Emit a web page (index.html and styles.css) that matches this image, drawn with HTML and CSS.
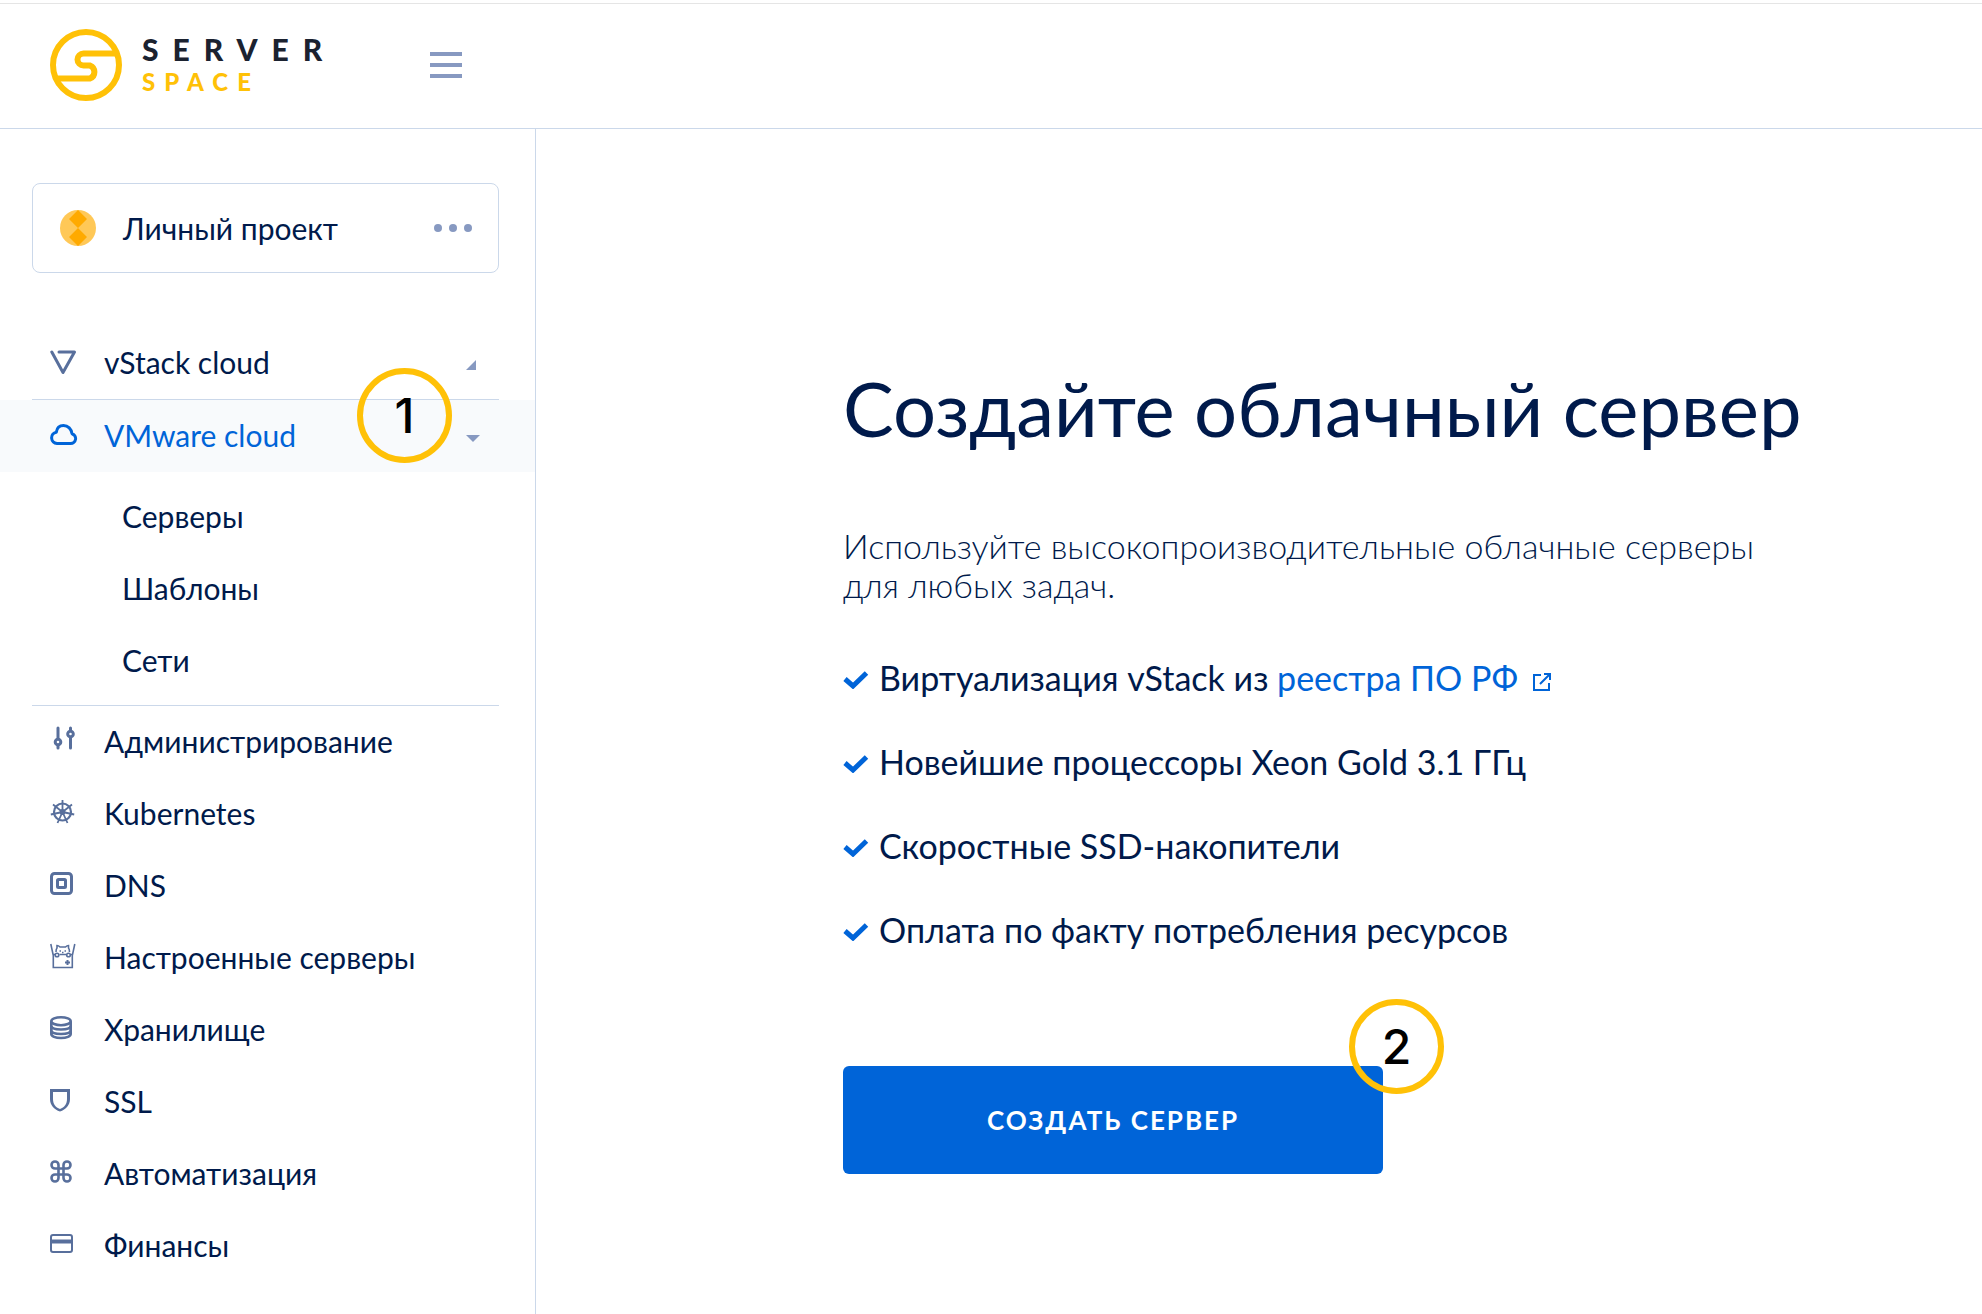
FILE: index.html
```html
<!DOCTYPE html>
<html lang="ru">
<head>
<meta charset="utf-8">
<title>Serverspace</title>
<link rel="stylesheet" href="styles.css">
</head>
<body>
<header class="topbar">
  <a class="logo" href="#" aria-label="Serverspace">
    <svg class="logo-mark" viewBox="0 0 72 72" fill="none" stroke="currentColor" stroke-width="6">
      <circle cx="36" cy="36" r="33"/>
      <path d="M66 24.500H33.500a6 6 0 0 0 0 12H40a7 7 0 0 1 0 13H6"/>
    </svg>
    <span class="logo-text"><span class="logo-server">SERVER</span><span class="logo-space">SPACE</span></span>
  </a>
  <button class="burger" type="button" aria-label="Меню"><span></span><span></span><span></span></button>
</header>
<div class="layout">
  <aside class="sidebar">
    <button class="project" type="button">
      <svg class="avatar" viewBox="0 0 36 36"><circle cx="18" cy="18" r="18" fill="#ffc857"/><path d="M18 0l9 9-9 9-9-9zM18 18l9 9-9 9-9-9z" fill="#ffaa00"/></svg>
      <span class="project-name">Личный проект</span>
      <svg class="dots" viewBox="0 0 38 8" fill="currentColor"><circle cx="4" cy="4" r="4"/><circle cx="19" cy="4" r="4"/><circle cx="34" cy="4" r="4"/></svg>
    </button>
    <nav class="nav">
      <a class="item" href="#">
        <svg class="icon" viewBox="0 0 28 28" fill="none" stroke="currentColor" stroke-width="3" stroke-linecap="round" stroke-linejoin="round"><path d="M9 5H24.500L13 25.500 1.800 5"/></svg>
        <span class="label">vStack cloud</span>
        <svg class="arrow" viewBox="0 0 14 10" fill="currentColor"><path d="M10 0V10H0z"/></svg>
      </a>
      <hr class="rule">
      <div class="current">
        <a class="item" href="#">
          <svg class="icon" viewBox="0 0 28 28" fill="none" stroke="currentColor" stroke-width="3" stroke-linejoin="round"><path d="M7 23.500h13.500a5 5 0 0 0 1.500-9.800c-.5-4.500-4-8.200-8.500-8.200-3.800 0-6.600 2.500-7.200 6.700A5.700 5.700 0 0 0 7 23.500z"/></svg>
          <span class="label">VMware cloud</span>
          <svg class="arrow" viewBox="0 0 14 10" fill="currentColor"><path d="M0 2H14L7 9z"/></svg>
        </a>
        <span class="marker marker-one">1</span>
      </div>
      <div class="sub">
        <a class="subitem" href="#">Серверы</a>
        <a class="subitem" href="#">Шаблоны</a>
        <a class="subitem" href="#">Сети</a>
      </div>
      <hr class="rule">
      <a class="item" href="#"><svg class="icon" viewBox="0 0 28 28" fill="none" stroke="currentColor" stroke-width="3" stroke-linecap="round"><path d="M8 2v10M8 20v2M20.500 2v2M20.500 12v10"/><circle cx="8" cy="16" r="2.800"/><circle cx="20.500" cy="8" r="2.800"/></svg><span class="label">Администрирование</span></a>
      <a class="item" href="#"><svg class="icon" viewBox="0 0 28 28" fill="none" stroke="currentColor" stroke-width="1.800"><circle cx="12.500" cy="14" r="8.500" stroke-width="2.200"/><circle cx="12.500" cy="14" r="2"/><path d="M12.500 14V2M12.500 14L3 6.500M12.500 14L22 6.500M12.500 14L.8 16.500M12.500 14L24.200 16.500M12.500 14L7.500 25M12.500 14L17.500 25"/></svg><span class="label">Kubernetes</span></a>
      <a class="item" href="#"><svg class="icon" viewBox="0 0 28 28" fill="none" stroke="currentColor" stroke-width="3"><rect x="1.500" y="3.500" width="20" height="20" rx="3"/><rect x="7.500" y="9.500" width="8" height="8" rx="1"/></svg><span class="label">DNS</span></a>
      <a class="item" href="#"><svg class="icon" viewBox="0 0 28 28" fill="none" stroke="currentColor" stroke-width="1.600"><path d="M.8 2l2.500 11.500V25.500h19V13.500L24.800 2M3.300 12.500h2M9.500 12.500h7M20.500 12.500h2M6 10C6 8 6.500 6.500 7 6V3.500c1 0 2.500 1 3 1.500h5.500c.5-.5 2-1.500 3-1.500V6c.5.500 1 2 1 4"/><circle cx="7" cy="13" r="1.800"/><circle cx="18.500" cy="13" r="1.800"/><path d="M15 20.500h5M17.500 18v5" stroke-width="2"/><path d="M9.500 9h1.500M14.500 9h1.500M12 10.500h1.500"/></svg><span class="label">Настроенные серверы</span></a>
      <a class="item" href="#"><svg class="icon" viewBox="0 0 28 28" fill="none" stroke="currentColor" stroke-width="2.600"><ellipse cx="11" cy="7.200" rx="9.700" ry="4"/><path d="M1.300 7.500V20c0 2.200 4 4 9.700 4s9.700-1.800 9.700-4V7.500M1.300 11.500c0 2.500 4 4 9.700 4s9.700-1.500 9.700-4M1.300 16c0 2.500 4 4 9.700 4s9.700-1.500 9.700-4"/></svg><span class="label">Хранилище</span></a>
      <a class="item" href="#"><svg class="icon" viewBox="0 0 28 28" fill="currentColor" fill-rule="evenodd"><path d="M0 3H20V13c0 6-4 10.500-10 12.500C4 23.500 0 19 0 13zM3 6V13c0 5 2.500 8.500 7 10 4.500-1.500 7-5 7-10V6z"/></svg><span class="label">SSL</span></a>
      <a class="item" href="#"><svg class="icon" viewBox="0 0 28 28" fill="none" stroke="currentColor" stroke-width="2.600"><path d="M8 10.500H5A3.500 3.500 0 1 1 8.500 7V20A3.500 3.500 0 1 1 5 16.500H17A3.500 3.500 0 1 1 13.500 20V7A3.500 3.500 0 1 1 17 10.500z"/></svg><span class="label">Автоматизация</span></a>
      <a class="item" href="#"><svg class="icon" viewBox="0 0 28 28" fill="none" stroke="currentColor" stroke-width="2"><rect x="1" y="5" width="21" height="17" rx="2"/><path d="M1 11.500h21" stroke-width="4"/></svg><span class="label">Финансы</span></a>
    </nav>
  </aside>
  <main class="main">
    <h1 class="title">Создайте облачный сервер</h1>
    <p class="lead">Используйте высокопроизводительные облачные серверы<br>для любых задач.</p>
    <ul class="features">
      <li><svg class="check" viewBox="0 0 26 18" fill="none" stroke="currentColor" stroke-width="5"><path d="M2 8l8 7L23.500 2"/></svg><span>Виртуализация vStack из <a class="link" href="#">реестра ПО РФ<svg class="external" viewBox="0 0 18 18" fill="none" stroke="currentColor" stroke-width="2"><path d="M8 2H1V17H16V10M11 1h6v6M17 1L7 11"/></svg></a></span></li>
      <li><svg class="check" viewBox="0 0 26 18" fill="none" stroke="currentColor" stroke-width="5"><path d="M2 8l8 7L23.500 2"/></svg><span>Новейшие процессоры Xeon Gold 3.1 ГГц</span></li>
      <li><svg class="check" viewBox="0 0 26 18" fill="none" stroke="currentColor" stroke-width="5"><path d="M2 8l8 7L23.500 2"/></svg><span>Скоростные SSD-накопители</span></li>
      <li><svg class="check" viewBox="0 0 26 18" fill="none" stroke="currentColor" stroke-width="5"><path d="M2 8l8 7L23.500 2"/></svg><span>Оплата по факту потребления ресурсов</span></li>
    </ul>
    <div class="action">
      <button class="create" type="button">СОЗДАТЬ СЕРВЕР</button>
      <span class="marker marker-two">2</span>
    </div>
  </main>
</div>
</body>
</html>
```
FILE: styles.css
```css
* { box-sizing: border-box; }
body {
  margin: 0;
  min-height: 100vh;
  display: flex;
  flex-direction: column;
  background: #fff;
  color: #001a4b;
  font-family: Lato, "Noto Sans", sans-serif;
  font-size: 30px;
}
button { font: inherit; color: inherit; cursor: pointer; }
a { color: inherit; text-decoration: none; }
svg { display: block; flex: none; }

.topbar {
  display: flex;
  align-items: center;
  height: 129px;
  padding: 2px 50px 0;
  border-bottom: 1px solid #cbd8ea;
  box-shadow: inset 0 3px #fff, inset 0 4px #e5e5e5;
}
.logo { display: flex; align-items: center; gap: 20px; width: 380px; }
.logo-mark { width: 72px; height: 72px; color: #ffc107; }
.logo-text { display: flex; flex-direction: column; padding-top: 2px; font-weight: 900; }
.logo-server { font-size: 30px; line-height: 32px; letter-spacing: 14px; color: #1b2230; }
.logo-space { font-size: 24px; line-height: 34px; letter-spacing: 9px; color: #ffc107; }
.burger {
  display: flex;
  flex-direction: column;
  gap: 7px;
  width: 32px;
  padding: 0;
  border: 0;
  background: none;
}
.burger span { height: 4px; background: #8799c1; }

.layout { flex: 1; display: flex; }
.sidebar { flex: none; width: 536px; padding-top: 54px; border-right: 1px solid #cbd8ea; }
.project {
  display: flex;
  align-items: center;
  width: 467px;
  height: 90px;
  margin: 0 0 54px 32px;
  padding: 0 26px 0 27px;
  border: 1px solid #cbd8ea;
  border-radius: 8px;
  background: #fff;
  text-align: left;
}
.avatar { width: 36px; height: 36px; }
.project-name { flex: 1; padding-left: 27px; }
.dots { width: 38px; height: 8px; color: #8799c1; }

.item { display: flex; align-items: center; height: 72px; padding: 0 55px 2px 50px; }
.icon { width: 28px; height: 28px; margin: 0 26px 2px 0; color: #586f9c; }
.label { flex: 1; }
.arrow { width: 14px; height: 10px; margin-top: 6px; color: #8799c1; }
.rule { height: 1px; margin: 0 36px 0 32px; border: 0; background: #cbd8ea; }
.current { position: relative; background: #f8fafc; color: #0064d8; }
.current .icon { color: inherit; }
.sub { padding: 8px 0 9px 122px; }
.subitem { display: block; line-height: 72px; }

.marker {
  position: absolute;
  width: 95px;
  height: 95px;
  border: 6px solid #ffc107;
  border-radius: 50%;
  color: #000;
  font: 500 48px/83px Inter, sans-serif;
  text-align: center;
}
.marker-one { right: 83px; top: -32px; }
.marker-two { right: -61px; top: -67px; }

.main { flex: 1; padding: 235px 40px 80px 307px; }
.title { margin: 0; font-size: 76px; line-height: 88px; font-weight: 400; white-space: nowrap; }
.lead { margin: 74px 0 0; font-size: 34px; line-height: 39px; font-weight: 300; }
.features { margin: 32px 0 0; padding: 0; list-style: none; font-size: 34px; line-height: 84px; }
.features li { display: flex; align-items: center; gap: 10px; }
.check { width: 26px; height: 18px; margin-top: 3px; color: #0064d8; }
.link { color: #0064d8; }
.external { display: inline-block; width: 18px; height: 18px; margin-left: 15px; }
.action { position: relative; width: 540px; margin-top: 94px; }
.create {
  width: 100%;
  height: 108px;
  border: 0;
  border-radius: 6px;
  background: #0064d8;
  color: #fff;
  font-size: 26px;
  font-weight: 700;
  letter-spacing: 2px;
}
```
